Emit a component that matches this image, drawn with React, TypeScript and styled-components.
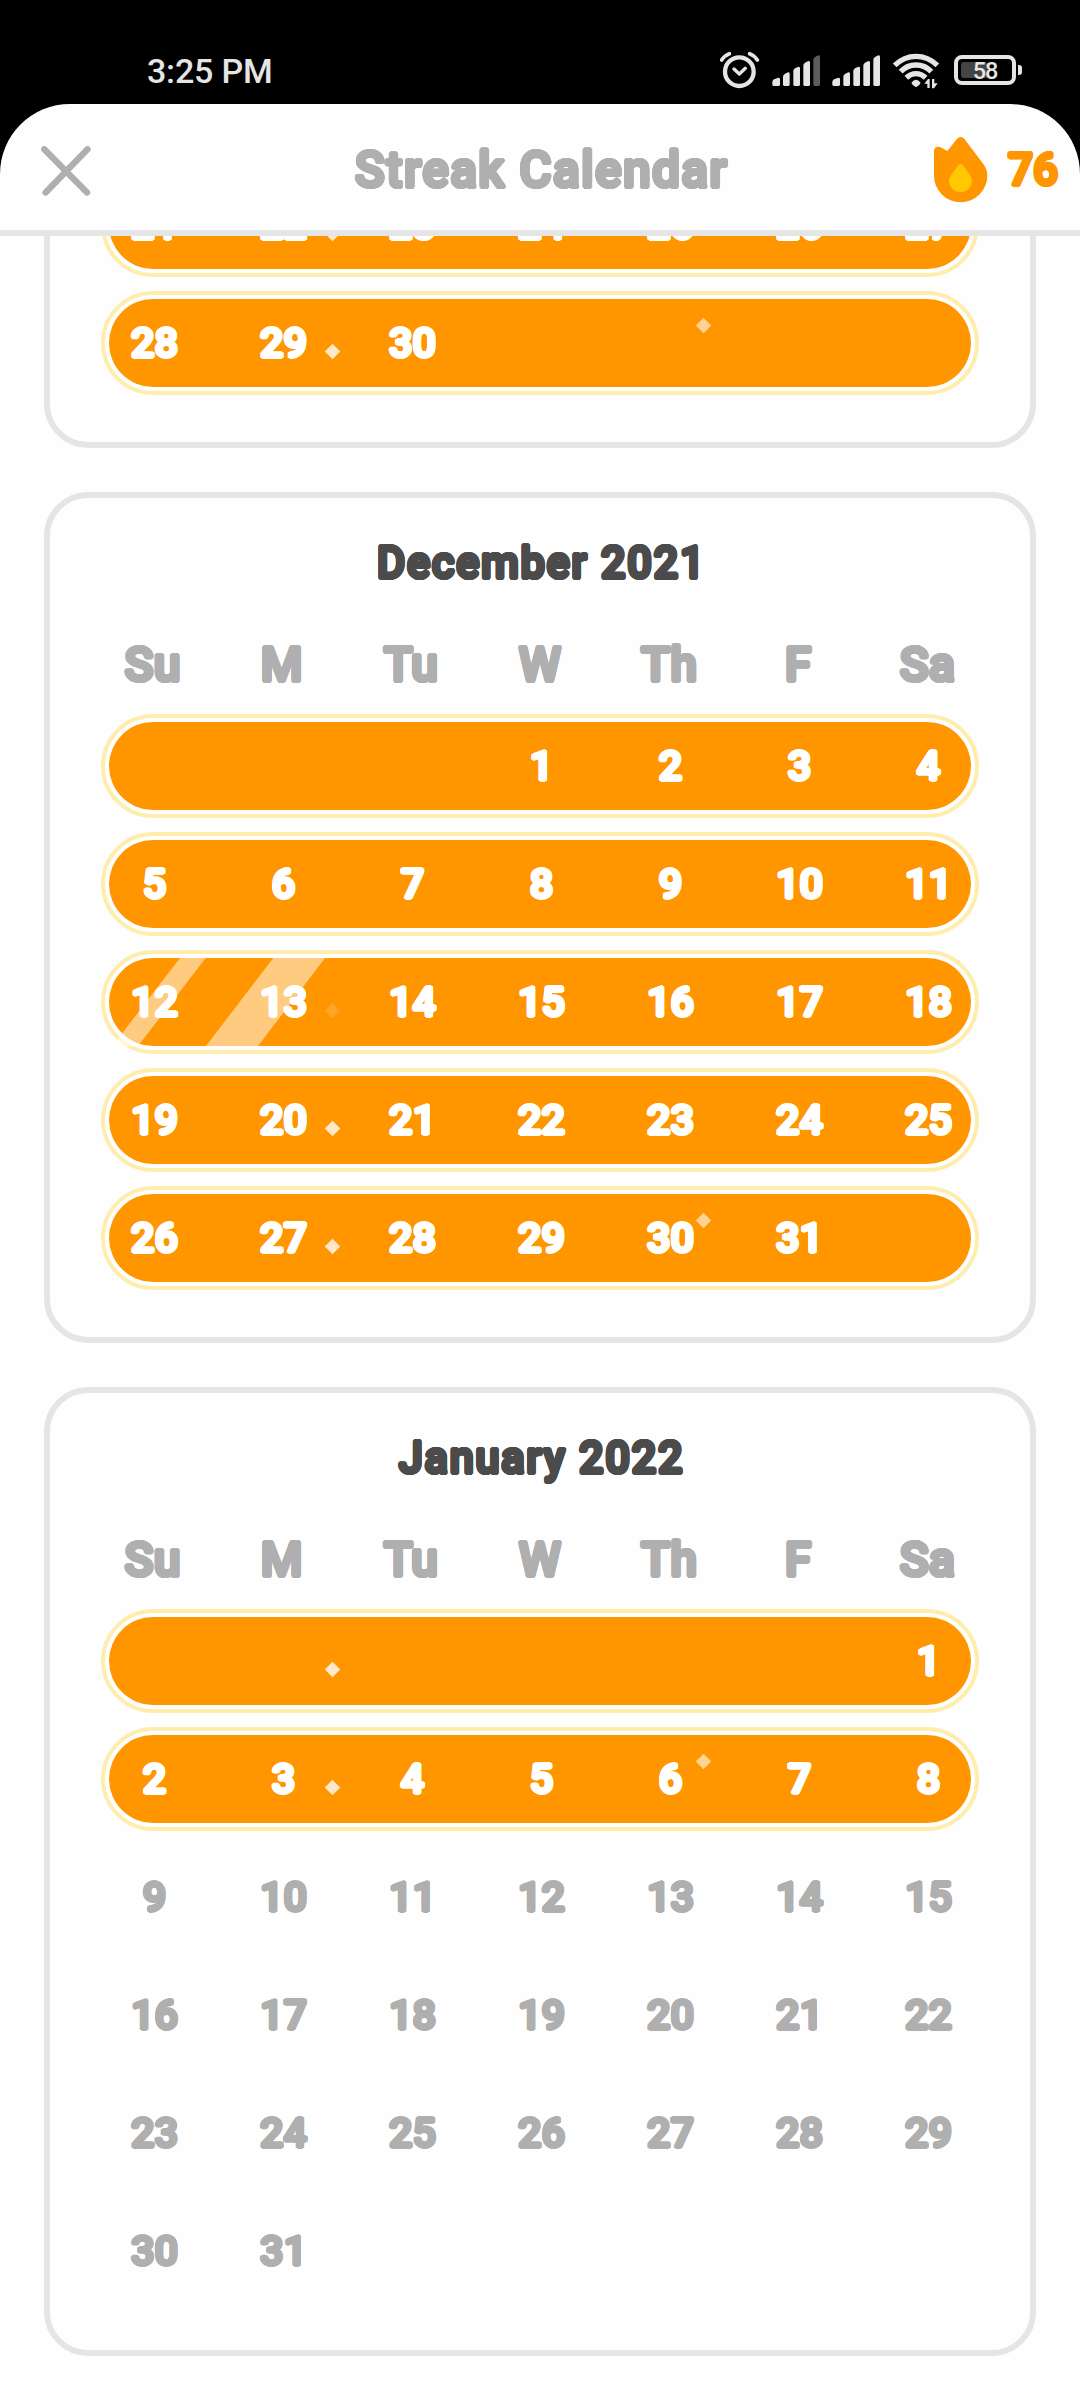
import React from "react";
import styled, { createGlobalStyle } from "styled-components";

const INK = "#afafaf";
const ORANGE = "#ff9600";
const LINE = "#e5e5e5";
const PAPER = "#fefefe";

const GlobalStyle = createGlobalStyle`
  *, *::before, *::after { box-sizing: border-box; }
  body { margin: 0; background: #000; font-family: Roboto, "Liberation Sans", sans-serif; }
`;

/* A ring of tiny shadows thickens the letters and rounds off their corners. */
const ring = (r: number) =>
  Array.from({ length: 16 }, (_, i) => {
    const a = (i * Math.PI) / 8;
    return `${(Math.cos(a) * r).toFixed(2)}px ${(Math.sin(a) * r).toFixed(2)}px 0 currentColor`;
  }).join(", ");

const Screen = styled.div`
  width: 1080px;
  height: 2400px;
  display: flex;
  flex-direction: column;
  background: #000;
  overflow: hidden;
`;

const StatusBar = styled.div`
  flex: none;
  height: 104px;
  padding: 35px 58px 0 147px;
  display: flex;
  justify-content: space-between;
  color: #e5e5e5;
`;

const Clock = styled.span`
  height: 72px;
  font-size: 34px;
  font-weight: 500;
  line-height: 72px;
  letter-spacing: -0.2px;
`;

const StatusIcons = styled.div`
  display: flex;
  height: 72px;
  align-items: flex-start;
`;

const BatteryWrap = styled.div`
  display: flex;
  align-items: center;
  gap: 2px;
  height: 30px;
  margin: 20px 0 0 14px;
`;

const Battery = styled.div`
  position: relative;
  width: 62px;
  height: 30px;
  border: 4px solid #e5e5e5;
  border-radius: 8px;
  display: flex;
  align-items: center;
  justify-content: center;
  font-size: 23.5px;
  font-weight: 500;
  line-height: 22px;
  letter-spacing: -1.2px;
`;

const Charge = styled.span`
  position: absolute;
  left: 3px;
  top: 3px;
  width: 27px;
  height: 16px;
  border-radius: 3px;
  background: #444;
`;

const Percent = styled.span`
  position: relative;
  top: 1px;
`;

const Nub = styled.span`
  width: 4px;
  height: 10px;
  border-radius: 0 3px 3px 0;
  background: #e5e5e5;
`;

const Sheet = styled.main`
  flex: 1;
  min-height: 0;
  display: flex;
  flex-direction: column;
  overflow: hidden;
  border-radius: 70px 70px 0 0;
  background: ${PAPER};
`;

const Header = styled.header`
  flex: none;
  height: 132px;
  padding: 0 22px;
  display: grid;
  grid-template-columns: 1fr auto 1fr;
  align-items: center;
  border-bottom: 6px solid ${LINE};
`;

const CloseButton = styled.button`
  justify-self: start;
  display: flex;
  margin: 7px 0 0 19px;
  padding: 0;
  border: 0;
  background: none;
`;

const Title = styled.h1`
  margin: 6px 0 0 3px;
  color: ${INK};
  font-size: 49.5px;
  font-weight: 500;
  line-height: 60px;
  letter-spacing: 1.4px;
  text-shadow: ${ring(1.8)};
`;

const Streak = styled.div`
  justify-self: end;
  display: flex;
  align-items: center;
  gap: 20px;
  margin-top: 5px;
  color: ${ORANGE};
`;

const StreakCount = styled.span`
  font-size: 44.5px;
  font-weight: 500;
  line-height: 60px;
  letter-spacing: -0.2px;
  text-shadow: ${ring(1.7)};
`;

const Months = styled.div`
  flex: 1;
  min-height: 0;
  padding: 0 44px 44px;
  display: flex;
  flex-direction: column;
  justify-content: flex-end;
  gap: 44px;
  overflow: hidden;
`;

const Card = styled.section`
  flex: none;
  padding: 20px 38px 47px;
  border: 6px solid ${LINE};
  border-radius: 44px;
`;

const MonthName = styled.h2`
  margin: 20px 0 0;
  padding-left: 3px;
  color: #4b4b4b;
  font-size: 43.5px;
  font-weight: 500;
  line-height: 52px;
  letter-spacing: 1.6px;
  text-align: center;
  text-shadow: ${ring(1.7)};
`;

const Days = styled.div`
  display: grid;
  grid-template-columns: repeat(7, 1fr);
  align-items: center;
  text-align: center;
`;

const Weekdays = styled(Days)`
  height: 60px;
  margin: 44px 0 20px;
  color: ${INK};
  font-size: 48px;
  font-weight: 500;
  letter-spacing: 0.3px;
  text-shadow: ${ring(1.8)};
`;

const Weeks = styled.div`
  display: flex;
  flex-direction: column;
  gap: 14px;
`;

const Week = styled.div<{ $lit: boolean }>`
  position: relative;
  height: 104px;
  margin: 0 13px;
  padding: 4px;
  border: 4px solid ${(p) => (p.$lit ? "#ffedad" : "transparent")};
  border-radius: 52px;
  color: ${(p) => (p.$lit ? "#fff" : INK)};
`;

const Pill = styled.div<{ $lit: boolean }>`
  position: relative;
  height: 88px;
  border-radius: 44px;
  background: ${(p) => (p.$lit ? ORANGE : "transparent")};
`;

const Numbers = styled(Days)`
  position: relative;
  height: 86px;
  margin: 0 -22px 0 -21px;
  padding-left: 2px;
  font-size: 41.5px;
  font-weight: 500;
  letter-spacing: 0;
  text-shadow: ${ring(1.6)};
`;

const Spark = styled.span<{ $x: number; $y: number; $alpha: number }>`
  position: absolute;
  left: ${(p) => p.$x - 5.5}px;
  top: ${(p) => p.$y - 5.5}px;
  width: 11px;
  height: 11px;
  transform: rotate(45deg);
  background: rgba(255, 255, 255, ${(p) => p.$alpha});
`;

const Shine = styled.svg`
  position: absolute;
  left: 0;
  top: 0;
`;

type WeekData = {
  days: (number | null)[];
  lit?: boolean;
  low?: number;
  high?: number;
  shine?: boolean;
};

const run = (from: number, to: number, lead = 0): (number | null)[] => {
  const days: (number | null)[] = Array(lead).fill(null);
  for (let d = from; d <= to; d++) days.push(d);
  while (days.length < 7) days.push(null);
  return days;
};

const months: { name?: string; weeks: WeekData[] }[] = [
  {
    weeks: [
      { days: run(21, 27), lit: true, low: 0.78 },
      { days: run(28, 30), lit: true, low: 0.78, high: 0.58 },
    ],
  },
  {
    name: "December 2021",
    weeks: [
      { days: run(1, 4, 3), lit: true },
      { days: run(5, 11), lit: true },
      { days: run(12, 18), lit: true, low: 0.15, shine: true },
      { days: run(19, 25), lit: true, low: 0.78 },
      { days: run(26, 31), lit: true, low: 0.78, high: 0.58 },
    ],
  },
  {
    name: "January 2022",
    weeks: [
      { days: run(1, 1, 6), lit: true, low: 0.78 },
      { days: run(2, 8), lit: true, low: 0.78, high: 0.58 },
      { days: run(9, 15) },
      { days: run(16, 22) },
      { days: run(23, 29) },
      { days: run(30, 31) },
    ],
  },
];

const weekdayNames = ["Su", "M", "Tu", "W", "Th", "F", "Sa"];

/* Status icons share one grid: three units to a pixel. */
const Signal = ({ xs, dimLast }: { xs: number[]; dimLast?: boolean }) => (
  <>
    {xs.map((x, i) => {
      const top = [143, 127, 110, 93, 76][i];
      const w = i === 0 ? 23 : 20;
      return (
        <path
          key={x}
          d={`M${x} ${top + 14}Q${x} ${top + 8} ${x + 5} ${top + 5}L${x + w - 5} ${top}Q${x + w} ${top} ${x + w} ${top + 4}V163Q${x + w} 168 ${x + w - 4} 168H${x + 4}Q${x} 168 ${x} 163Z`}
          fill={dimLast && i === 4 ? "#5c5c5c" : "#e5e5e5"}
        />
      );
    })}
  </>
);

const StatusGlyphs = () => (
  <svg width="220" height="72" viewBox="60 15 660 216" fill="none" stroke="#e5e5e5">
    <circle cx="118" cy="125" r="43" strokeWidth="13" />
    <path d="M102 117l16 15 18-17" strokeWidth="10" strokeLinecap="round" strokeLinejoin="round" />
    <path d="M65 90Q74 76 88 71M172 90Q163 76 149 71" strokeWidth="11" strokeLinecap="round" />
    <g stroke="none">
      <Signal xs={[217, 249, 280, 310, 340]} dimLast />
      <Signal xs={[397, 430, 460, 490, 520]} />
    </g>
    <g strokeWidth="16">
      <path d="M584 106Q612 79 648 79T712 106" />
      <path d="M602 125Q621 105 648 105T694 125" />
      <path d="M619 143Q632 131 648 131T677 143" />
    </g>
    <path d="M634 158Q648 141 662 158Q660 165 648 172Q636 165 634 158Z" fill="#e5e5e5" stroke="none" />
    <path d="M673 161L684 147H689V174H682V161ZM713 160L702 175H696V147H703V160Z" fill="#e5e5e5" stroke="none" />
  </svg>
);

const Flame = () => (
  <svg width="54" height="66" viewBox="0 0 162 198">
    <path
      d="M0 116V42C0 30 13 26 24 33L40 42L68 7Q80 -7 92 7L144 76C155 90 160 101 160 116A80 80 0 0 1 0 116Z"
      fill={ORANGE}
    />
    <path
      d="M73 85Q80 76 87 85L104 109C111 118 114 124 114 131A34.5 34 0 0 1 45 131C45 124 48 118 55 109Z"
      fill="#ffc800"
    />
  </svg>
);

export default function App() {
  return (
    <>
      <GlobalStyle />
      <Screen>
        <StatusBar>
          <Clock>3:25 PM</Clock>
          <StatusIcons>
            <StatusGlyphs />
            <BatteryWrap>
              <Battery>
                <Charge />
                <Percent>58</Percent>
              </Battery>
              <Nub />
            </BatteryWrap>
          </StatusIcons>
        </StatusBar>
        <Sheet>
          <Header>
            <CloseButton aria-label="Close">
              <svg width="50" height="50" viewBox="0 0 50 50">
                <path d="M3.3 3.3L46 46.5M46.5 3.3L4.6 46.5" stroke={INK} strokeWidth="6.4" strokeLinecap="round" />
              </svg>
            </CloseButton>
            <Title>Streak Calendar</Title>
            <Streak>
              <Flame />
              <StreakCount>76</StreakCount>
            </Streak>
          </Header>
          <Months>
            {months.map((month, m) => (
              <Card key={m}>
                {month.name && (
                  <>
                    <MonthName>{month.name}</MonthName>
                    <Weekdays>
                      {weekdayNames.map((n) => (
                        <span key={n}>{n}</span>
                      ))}
                    </Weekdays>
                  </>
                )}
                <Weeks>
                  {month.weeks.map((week, w) => (
                    <Week key={w} $lit={!!week.lit}>
                      <Pill $lit={!!week.lit}>
                        {week.shine && (
                          <Shine width="862" height="88" viewBox="0 0 862 88" overflow="visible">
                            <path d="M71 0H96.7L29 88H3.3ZM164.3 0H216L149 88H97Z" fill="#fff" fillOpacity="0.5" />
                          </Shine>
                        )}
                        {week.low && <Spark $x={223.5} $y={52.3} $alpha={week.low} />}
                        {week.high && <Spark $x={594.3} $y={26} $alpha={week.high} />}
                        <Numbers>
                          {week.days.map((d, i) => (
                            <span key={i}>{d}</span>
                          ))}
                        </Numbers>
                      </Pill>
                    </Week>
                  ))}
                </Weeks>
              </Card>
            ))}
          </Months>
        </Sheet>
      </Screen>
    </>
  );
}
